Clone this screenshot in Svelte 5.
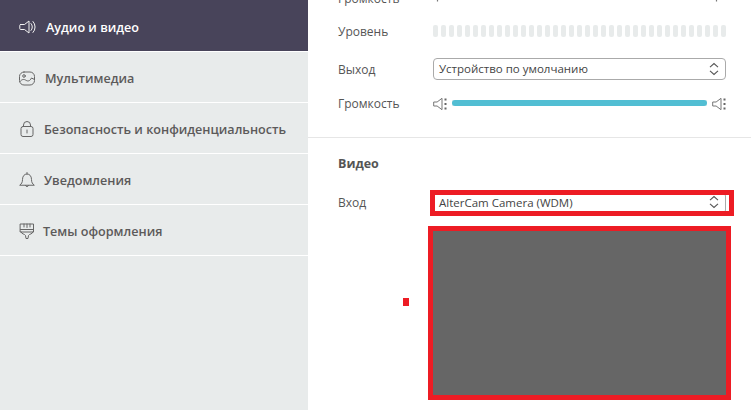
<script>
  const menu = [
    { id: 'audio', text: 'Аудио и видео', gap: 10, active: true },
    { id: 'media', text: 'Мультимедиа', gap: 9 },
    { id: 'lock', text: 'Безопасность и конфиденциальность', gap: 8 },
    { id: 'bell', text: 'Уведомления', gap: 8 },
    { id: 'brush', text: 'Темы оформления', gap: 7 }
  ];
  const cells = Array.from({ length: 37 });
</script>

{#snippet chevrons()}
  <svg class="chev" width="10" height="14" viewBox="0 0 10 14" fill="none" stroke="#555" stroke-width="1.1">
    <path d="M1 5.2 5 1.5l4 3.7M1 8.8l4 3.7 4-3.7" />
  </svg>
{/snippet}

{#snippet speaker()}
  <svg width="14" height="14" viewBox="0 0 14 14" fill="none">
    <path d="M.7 5h3.4L9 1.3v11.4L4.1 9H.7z" stroke="#777" stroke-width="1" stroke-linejoin="round" />
    <path d="M11.5 1.5h2v2h-2zm0 4.5h2v2h-2zm0 4.5h2v2h-2z" fill="#666" />
  </svg>
{/snippet}

{#snippet mic()}
  <svg class="mic" width="14" height="14" viewBox="0 0 14 14" fill="none">
    <path d="M1 5.500h7M4.500 5.500v6M2.500 8h4M1 1h7" stroke="#777" stroke-width="1.200" />
    <path d="M11 7h2.400v2.400H11zm0-4h2.400v2.400H11z" fill="#666" />
  </svg>
{/snippet}

<div class="page">
  <nav class="sidebar">
    {#each menu as item}
      <div class={item.active ? 'item active' : 'item'} style="gap: {item.gap}px">
        <svg width="18" height="18" viewBox="0 0 18 18" fill="none" stroke="currentColor" stroke-width="1" stroke-linecap="round" stroke-linejoin="round">
          {#if item.id === 'audio'}
            <path d="M2.500 6.500h4L11 3v12L6.500 11.500h-4a.8.8 0 0 1-.7-.8V7.300a.8.800 0 0 1 .7-.8z" />
            <path d="M13 5.500a5 5 0 0 1 0 7M15 3.500a8 8 0 0 1 0 11" />
          {:else if item.id === 'media'}
            <rect x="1.500" y="3" width="15" height="13" rx="4.500" />
            <circle cx="6" cy="7" r="1.300" />
            <path d="M2 12.500c2-2.500 4-2.500 6-1.200s4 .7 5.500-2.300l3 1.500" />
          {:else if item.id === 'lock'}
            <rect x="3" y="6.500" width="12" height="10" rx="2" />
            <path d="M5.500 6.500V5a3.500 3.500 0 0 1 7 0v1.500M9 10v3" />
          {:else if item.id === 'bell'}
            <path d="M2 14c1.500-1.200 2.500-2.500 2.500-5.500C4.500 5 6.500 3 9 3s4.500 2 4.500 5.500c0 3 1 4.300 2.500 5.500z" />
            <path d="M9 1.500V3M7.500 14.500a1.600 1.600 0 0 0 3 0" />
          {:else}
            <path d="M2.500 2h13v8h-13zM2.500 7.500h13M6 2v3M9 2v3.500M12 2v3" />
            <path d="M3 10c0 2 4 2 4.500 3.500L8 16.500h2l.5-3C11 12 15 12 15 10" />
          {/if}
        </svg>
        <span>{item.text}</span>
      </div>
    {/each}
  </nav>

  <main class="content">
    <section class="audio">
      <div class="row mic-row">
        <span>Громкость</span>
        <div class="slider">
          {@render mic()}
          <div class="track"><div class="fill small"></div></div>
          {@render mic()}
        </div>
      </div>
      <div class="row level-row">
        <span>Уровень</span>
        <div class="level">
          {#each cells as _}
            <i></i>
          {/each}
        </div>
      </div>
      <div class="row out-row">
        <span class="low">Выход</span>
        <div class="select">
          <span>Устройство по умолчанию</span>
          {@render chevrons()}
        </div>
      </div>
      <div class="row vol-row">
        <span>Громкость</span>
        <div class="slider">
          {@render speaker()}
          <div class="track full"><div class="fill"></div></div>
          {@render speaker()}
        </div>
      </div>
    </section>

    <section class="video">
      <h3>Видео</h3>
      <div class="row in-row">
        <span class="raised">Вход</span>
        <div class="select lifted">
          <span>AlterCam Camera (WDM)</span>
          {@render chevrons()}
          <div class="mark"></div>
        </div>
      </div>
      <div class="preview-row">
        <div class="dot"></div>
        <div class="preview"></div>
      </div>
    </section>
  </main>
</div>

<style>
  :global(body) {
    overflow: hidden;
    background: #fff;
  }

  .page {
    display: flex;
    width: 751px;
    height: 410px;
    overflow: hidden;
    font-family: "Open Sans", sans-serif;
    font-size: 12px;
    color: #555;
  }

  .sidebar {
    flex: none;
    width: 308px;
    height: 100%;
    background: #e8ebeb;
  }

  .item {
    display: flex;
    align-items: center;
    height: 48px;
    padding: 2px 0 0 19px;
    border-bottom: 1px solid #fff;
    font-size: 12.600px;
    font-weight: 550;
    color: #5c5a5a;
  }

  .item svg {
    flex: none;
    margin-left: -1px;
    color: #666;
  }

  .item.active {
    height: 48px;
    padding-top: 3px;
    background: #48445a;
    color: #fff;
  }

  .item.active svg {
    color: #f2f2f2;
  }

  .content {
    flex: 1;
    min-width: 0;
    margin-top: -20px;
  }

  .audio {
    height: 157px;
    border-bottom: 1px solid #e6e6e6;
  }

  .row {
    display: grid;
    grid-template-columns: 95px 293px;
    align-items: center;
    padding-left: 30px;
  }

  .mic-row {
    height: 36px;
  }

  .level-row {
    height: 31px;
  }

  .out-row {
    height: 43px;
  }

  .vol-row {
    height: 27px;
  }

  .low {
    margin-top: 1px;
  }

  .raised {
    margin-top: -1px;
  }

  .slider {
    display: flex;
    align-items: center;
    justify-content: space-between;
  }

  .mic {
    margin-top: -2px;
  }

  .track {
    width: 255px;
    height: 2px;
    background: #e2efef;
  }

  .track.full {
    height: 6px;
    margin-top: -1px;
  }

  .fill {
    height: 100%;
    border-radius: 3px;
    background: #52bed3;
  }

  .fill.small {
    width: 3px;
  }

  .level {
    display: flex;
    justify-content: space-between;
    height: 12px;
    margin-top: -2px;
  }

  .level i {
    width: 5px;
    border-radius: 2px;
    background: #e8ebeb;
  }

  .select {
    position: relative;
    display: flex;
    align-items: center;
    justify-content: space-between;
    box-sizing: border-box;
    height: 22px;
    padding: 0 5px;
    border: 1px solid #aaa;
    border-radius: 4px;
    font-size: 11.500px;
    color: #444;
  }

  .select.lifted {
    padding-bottom: 2px;
  }

  .chev {
    margin-right: 1px;
  }

  .video h3 {
    margin: 0;
    padding: 17px 0 0 30px;
    height: 31px;
    font-size: 12.500px;
    font-weight: 700;
    line-height: 17px;
    color: #555;
  }

  .in-row {
    height: 22px;
    margin-top: 6px;
  }

  /* red annotation drawn over the select */
  .mark {
    position: absolute;
    top: 2px;
    left: 1px;
    right: -4px;
    bottom: 2px;
    outline: 5px solid #ed1c24;
    pointer-events: none;
  }

  .preview-row {
    position: relative;
    margin: 17px 0 0 125px;
  }

  .preview {
    box-sizing: border-box;
    width: 293px;
    height: 164px;
    background: #666;
    outline: 5px solid #ed1c24;
  }

  .dot {
    position: absolute;
    left: -30px;
    top: 67px;
    width: 6px;
    height: 8px;
    background: #ed1c24;
  }
</style>
